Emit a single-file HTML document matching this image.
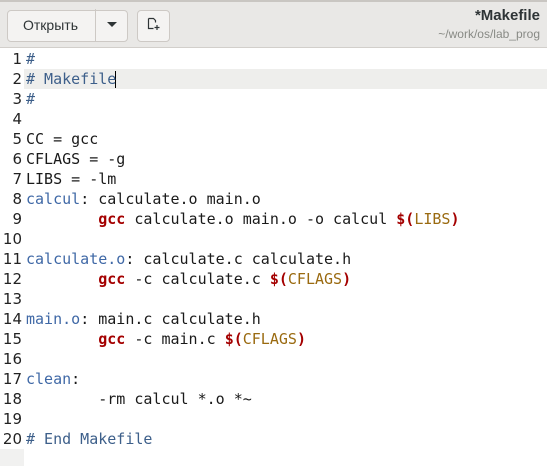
<!DOCTYPE html>
<html><head><meta charset="utf-8"><style>
*{margin:0;padding:0;box-sizing:border-box}
body{width:547px;height:466px;overflow:hidden;background:#fff;position:relative;font-family:"Liberation Sans","DejaVu Sans",sans-serif}
#hdr{position:absolute;left:0;top:0;width:547px;height:48px;background:#e9e8e6;border-bottom:1px solid #d2cfcb;border-top:2px solid #c9c6c2}
.btn{position:absolute;top:8px;height:32px;background:#f4f3f2;border:1px solid #cdc9c5;border-radius:4px}
#gut{position:absolute;left:0;top:449px;width:24px;height:17px;background:#f1f1f0}
#cur{position:absolute;left:24px;top:69px;width:523px;height:20px;background:#eeeeec}
.ln{position:absolute;left:0;width:22px;text-align:right;font-family:"DejaVu Sans",sans-serif;font-size:15px;color:#222;line-height:20px}
.code{position:absolute;left:26px;top:49px;font-family:"DejaVu Sans Mono",monospace;font-size:15px;line-height:20px;color:#1a1a1a;white-space:pre}
.c{color:#3d5f8a}.t{color:#3f68a6}.r{color:#a40000;font-weight:bold}.v{color:#9a6a10}
</style></head><body>
<div id="hdr">
 <div class="btn" style="left:7px;width:121px"></div>
 <div style="position:absolute;left:95px;top:7px;width:1px;height:32px;background:#cdc9c5"></div>
 <div style="position:absolute;left:23px;top:15px;font-size:14px;color:#2e3436">Открыть</div>
 <div style="position:absolute;left:107px;top:20px;width:0;height:0;border-left:5px solid transparent;border-right:5px solid transparent;border-top:5px solid #2e3436"></div>
 <div class="btn" style="left:137px;width:33px"></div>
 <svg style="position:absolute;left:147px;top:15px" width="14" height="14" viewBox="0 0 14 14" fill="none" stroke="#2e3436" stroke-width="1.2"><path d="M1.5 1.5h5l2 2v2M1.5 1.5v10h5"/><path d="M10 8v5M7.5 10.5h5"/></svg>
 <div style="position:absolute;left:360px;width:180px;top:5px;text-align:right;font-size:15px;font-weight:bold;color:#2e3436">*Makefile</div>
 <div style="position:absolute;left:360px;width:180px;top:25px;text-align:right;font-size:12px;color:#888a85">~/work/os/lab_prog</div>
</div>
<div id="cur"></div>
<div id="gut"></div>
<div style="position:absolute;left:115px;top:71px;width:1px;height:17px;background:#000"></div>
<div class="ln" style="top:49px">1<br>2<br>3<br>4<br>5<br>6<br>7<br>8<br>9<br>10<br>11<br>12<br>13<br>14<br>15<br>16<br>17<br>18<br>19<br>20</div>
<div class="code"><span class="c">#</span>
<span class="c"># Makefile</span>
<span class="c">#</span>

CC = gcc
CFLAGS = -g
LIBS = -lm
<span class="t">calcul</span>: calculate.o main.o
        <span class="r">gcc</span> calculate.o main.o -o calcul <span class="r">$(</span><span class="v">LIBS</span><span class="r">)</span>

<span class="t">calculate.o</span>: calculate.c calculate.h
        <span class="r">gcc</span> -c calculate.c <span class="r">$(</span><span class="v">CFLAGS</span><span class="r">)</span>

<span class="t">main.o</span>: main.c calculate.h
        <span class="r">gcc</span> -c main.c <span class="r">$(</span><span class="v">CFLAGS</span><span class="r">)</span>

<span class="t">clean</span>:
        -rm calcul *.o *~

<span class="c"># End Makefile</span></div>
</body></html>
